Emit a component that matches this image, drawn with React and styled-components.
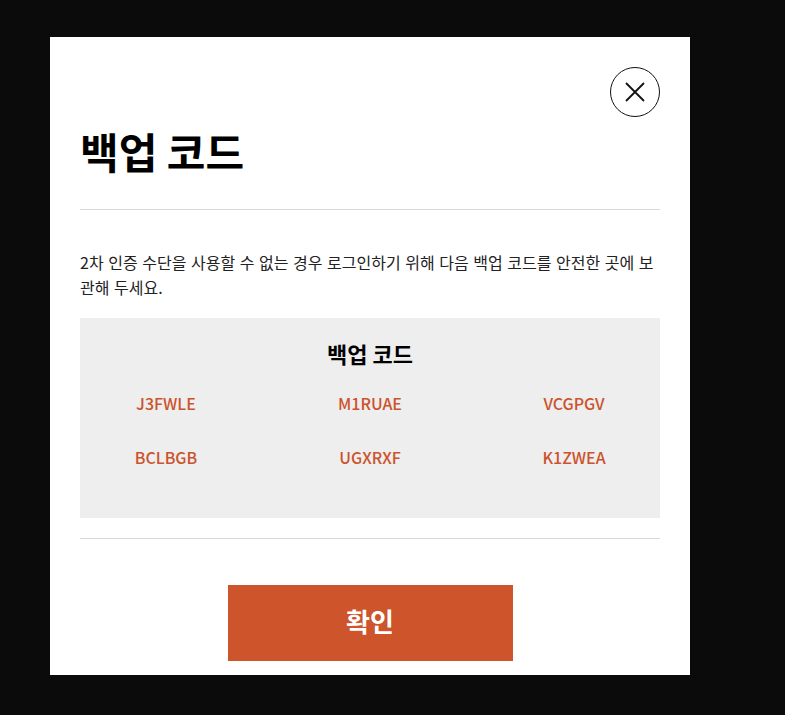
import styled, { createGlobalStyle } from "styled-components";

const GlobalStyle = createGlobalStyle`
  html, body {
    margin: 0;
    padding: 0;
    background: #0b0b0b;
  }
  body {
    font-family: "Noto Sans CJK KR", "Noto Sans", sans-serif;
    color: #111;
  }
`;

const Page = styled.div`
  width: 785px;
  height: 715px;
  padding: 37px 0 0 50px;
  box-sizing: border-box;
`;

const Modal = styled.div`
  position: relative;
  width: 640px;
  height: 638px;
  box-sizing: border-box;
  background: #ffffff;
  padding: 90px 30px 0;
`;

const CloseButton = styled.button`
  position: absolute;
  top: 30px;
  right: 30px;
  width: 50px;
  height: 50px;
  border-radius: 50%;
  border: 1px solid #111;
  background: #fff;
  padding: 0;
  display: flex;
  align-items: center;
  justify-content: center;
  cursor: pointer;
`;

const Title = styled.h1`
  margin: 0;
  font-size: 42px;
  line-height: 48px;
  font-weight: 700;
  color: #000;
`;

const Divider = styled.hr`
  margin: ${(p) => p.$top}px 0 0;
  border: 0;
  border-top: 1px solid #d9d9d9;
`;

const Description = styled.p`
  margin: 40px 0 0;
  font-size: 16px;
  line-height: 25px;
  word-spacing: 1px;
  color: #222;
`;

const CodeBox = styled.div`
  margin-top: 18px;
  height: 200px;
  box-sizing: border-box;
  background: #eeeeee;
  padding-top: 20px;
`;

const BoxTitle = styled.h2`
  margin: 0;
  text-align: center;
  font-size: 22px;
  line-height: 30px;
  font-weight: 700;
  color: #000;
`;

const CodeGrid = styled.div`
  margin-top: 23px;
  display: grid;
  grid-template-columns: repeat(3, 204px);
  justify-content: center;
  row-gap: 30px;
`;

const Code = styled.span`
  text-align: center;
  font-size: 16px;
  line-height: 24px;
  font-weight: 500;
  color: #cb532d;
`;

const Actions = styled.div`
  display: flex;
  justify-content: center;
  margin-top: 46px;
`;

const Confirm = styled.button`
  width: 285px;
  height: 76px;
  border: 0;
  padding: 0 0 6px;
  background: #cd542b;
  color: #fff;
  font-family: "Noto Sans CJK KR", "Noto Sans", sans-serif;
  font-size: 26px;
  font-weight: 700;
  cursor: pointer;
`;

const codes = ["J3FWLE", "M1RUAE", "VCGPGV", "BCLBGB", "UGXRXF", "K1ZWEA"];

export default function App() {
  return (
    <Page>
      <GlobalStyle />
      <Modal>
        <CloseButton aria-label="닫기">
          <svg width="22" height="22" viewBox="0 0 22 22">
            <path d="M2 2 L20 20 M20 2 L2 20" stroke="#111" strokeWidth="1.8" fill="none" />
          </svg>
        </CloseButton>
        <Title>백업 코드</Title>
        <Divider $top={34} />
        <Description>
          2차 인증 수단을 사용할 수 없는 경우 로그인하기 위해 다음 백업 코드를 안전한 곳에 보관해 두세요.
        </Description>
        <CodeBox>
          <BoxTitle>백업 코드</BoxTitle>
          <CodeGrid>
            {codes.map((code) => (
              <Code key={code}>{code}</Code>
            ))}
          </CodeGrid>
        </CodeBox>
        <Divider $top={20} />
        <Actions>
          <Confirm>확인</Confirm>
        </Actions>
      </Modal>
    </Page>
  );
}
